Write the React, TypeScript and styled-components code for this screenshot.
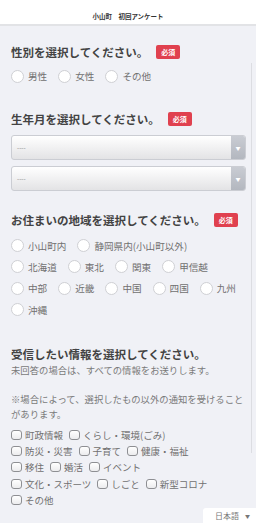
import React from "react";
import styled, { createGlobalStyle } from "styled-components";

const Global = createGlobalStyle`
  html, body { margin: 0; padding: 0; background: #f0f1f6; }
  body { font-family: "Noto Sans CJK JP", "Noto Sans", sans-serif; overflow: hidden; }
  * { box-sizing: border-box; }
`;

const Header = styled.header`
  height: 26px;
  background: #fff;
  border-bottom: 2px solid #e2e3e6;
  display: flex;
  align-items: flex-end;
  justify-content: center;
  padding-bottom: 4px;
`;

const HeaderTitle = styled.h1`
  margin: 0;
  font-size: 6.5px;
  line-height: 8px;
  font-weight: 700;
  color: #333;
  white-space: pre;
`;

const Main = styled.main`
  padding: 0 10px 0 11px;
`;

const Section = styled.section<{ $top: number }>`
  padding-top: ${(p) => p.$top}px;
`;

const TitleRow = styled.div`
  display: flex;
  align-items: center;
  gap: 8px;
  height: 16px;
`;

const Title = styled.h2`
  margin: 0;
  font-size: 11.5px;
  line-height: 16px;
  font-weight: 700;
  color: #434343;
  white-space: nowrap;
`;

const Badge = styled.span`
  display: inline-flex;
  align-items: center;
  justify-content: center;
  width: 24px;
  height: 14px;
  background: #e0414f;
  border-radius: 2px;
  color: #fff;
  font-size: 7px;
  font-weight: 700;
`;

const OptionWrap = styled.div<{ $top: number; $rowH: number }>`
  margin-top: ${(p) => p.$top}px;
  display: flex;
  flex-direction: column;
  > * { height: ${(p) => p.$rowH}px; }
`;

const OptionRow = styled.div<{ $gap: number }>`
  display: flex;
  align-items: center;
  column-gap: ${(p) => p.$gap}px;
  width: 100%;
`;

const RadioItem = styled.label`
  display: inline-flex;
  align-items: center;
  gap: 4px;
  font-size: 9.6px;
  color: #707070;
  white-space: nowrap;
`;

const RadioCircle = styled.span`
  width: 13px;
  height: 13px;
  border-radius: 50%;
  background: #fff;
  border: 1px solid #cfd0d4;
  flex: none;
`;

const CheckItem = styled.label`
  display: inline-flex;
  align-items: center;
  gap: 3px;
  font-size: 9.5px;
  color: #707070;
  white-space: nowrap;
`;

const CheckBox = styled.span`
  width: 11px;
  height: 10px;
  border-radius: 3px;
  background: linear-gradient(#ffffff, #ececee);
  border: 1px solid #8e8f93;
  flex: none;
`;

const Select = styled.div<{ $top: number }>`
  margin-top: ${(p) => p.$top}px;
  height: 25px;
  border: 1px solid #cbcdd3;
  border-radius: 3px;
  background: linear-gradient(#ffffff, #e3e3e5);
  display: flex;
  align-items: stretch;
  overflow: hidden;
`;

const SelectText = styled.span`
  flex: 1;
  display: flex;
  align-items: center;
  padding-left: 5px;
  font-family: "DejaVu Sans", sans-serif;
  font-size: 6px;
  color: #8a8a8a;
`;

const SelectArrow = styled.span`
  width: 14px;
  background: linear-gradient(#c9ccd3, #b3b7bf);
  display: flex;
  align-items: center;
  justify-content: center;
  color: #fff;
  font-size: 5px;
`;

const Note = styled.p`
  margin: 0;
  font-size: 9.35px;
  line-height: 14.6px;
  color: #7a7a7a;
`;

const Notes = styled.div`
  margin-top: 1px;
`;

const LangBox = styled.div`
  position: fixed;
  right: 0;
  bottom: -8px;
  width: 53px;
  height: 23px;
  background: #fff;
  border-radius: 3px 0 0 0;
  display: flex;
  align-items: center;
  padding-left: 12px;
  padding-bottom: 8px;
  gap: 6px;
  font-size: 8px;
  color: #777;
`;

const LangCaret = styled.span`
  font-size: 5px;
`;

const Scroll = styled.div`
  position: fixed;
  right: 4px;
  top: 63px;
  width: 1px;
  height: 390px;
  background: #dcdde2;
`;

const Radio = ({ label }: { label: string }) => (
  <RadioItem>
    <RadioCircle />
    {label}
  </RadioItem>
);

const Check = ({ label }: { label: string }) => (
  <CheckItem>
    <CheckBox />
    {label}
  </CheckItem>
);

const regionRows = [
  ["小山町内", "静岡県内(小山町以外)"],
  ["北海道", "東北", "関東", "甲信越"],
  ["中部", "近畿", "中国", "四国", "九州"],
  ["沖縄"],
];

const infoRows = [
  ["町政情報", "くらし・環境(ごみ)"],
  ["防災・災害", "子育て", "健康・福祉"],
  ["移住", "婚活", "イベント"],
  ["文化・スポーツ", "しごと", "新型コロナ"],
  ["その他"],
];

export default function App() {
  return (
    <>
      <Global />
      <Header>
        <HeaderTitle>{"小山町　初回アンケート"}</HeaderTitle>
      </Header>
      <Main>
        <Section $top={18}>
          <TitleRow>
            <Title>性別を選択してください。</Title>
            <Badge>必須</Badge>
          </TitleRow>
          <OptionWrap $top={5} $rowH={22}>
            <OptionRow $gap={11}>
              <Radio label="男性" />
              <Radio label="女性" />
              <Radio label="その他" />
            </OptionRow>
          </OptionWrap>
        </Section>

        <Section $top={24}>
          <TitleRow>
            <Title>生年月を選択してください。</Title>
            <Badge>必須</Badge>
          </TitleRow>
          <Select $top={8}>
            <SelectText>----</SelectText>
            <SelectArrow>▼</SelectArrow>
          </Select>
          <Select $top={6}>
            <SelectText>----</SelectText>
            <SelectArrow>▼</SelectArrow>
          </Select>
        </Section>

        <Section $top={21}>
          <TitleRow>
            <Title>お住まいの地域を選択してください。</Title>
            <Badge>必須</Badge>
          </TitleRow>
          <OptionWrap $top={7} $rowH={21.3}>
            {regionRows.map((row, i) => (
              <OptionRow key={i} $gap={11}>
                {row.map((l) => (
                  <Radio key={l} label={l} />
                ))}
              </OptionRow>
            ))}
          </OptionWrap>
        </Section>

        <Section $top={26}>
          <TitleRow>
            <Title>受信したい情報を選択してください。</Title>
          </TitleRow>
          <Notes>
            <Note>未回答の場合は、すべての情報をお送りします。</Note>
            <Note>&nbsp;</Note>
            <Note>※場合によって、選択したもの以外の通知を受けることがあります。</Note>
          </Notes>
          <OptionWrap $top={5} $rowH={16.3}>
            {infoRows.map((row, i) => (
              <OptionRow key={i} $gap={6}>
                {row.map((l) => (
                  <Check key={l} label={l} />
                ))}
              </OptionRow>
            ))}
          </OptionWrap>
        </Section>
      </Main>
      <Scroll />
      <LangBox>
        日本語 <LangCaret>▼</LangCaret>
      </LangBox>
    </>
  );
}
